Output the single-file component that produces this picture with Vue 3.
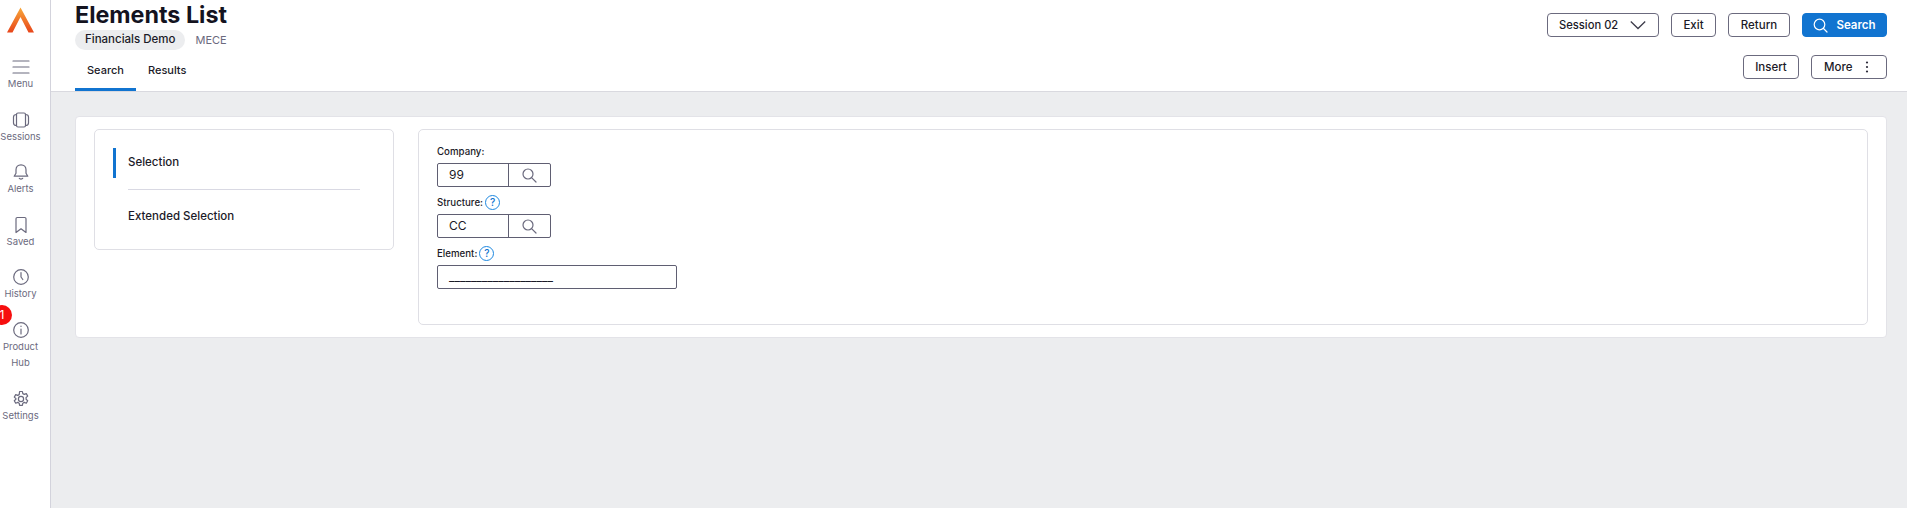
<script setup>
const nav = [
  { label: 'Menu', icon: 'menu' },
  { label: 'Sessions', icon: 'sessions' },
  { label: 'Alerts', icon: 'alerts' },
  { label: 'Saved', icon: 'saved' },
  { label: 'History', icon: 'history' },
  { label: 'Product Hub', icon: 'info', badge: 1 },
  { label: 'Settings', icon: 'settings' },
]
</script>

<template>
  <div class="app">
    <aside class="side">
      <svg class="logo" width="27" height="26" viewBox="0 0 27 26">
        <defs>
          <linearGradient id="lg" x1="0" y1="0" x2="0" y2="1">
            <stop offset="0" stop-color="#f8a83a" />
            <stop offset="1" stop-color="#e8451a" />
          </linearGradient>
        </defs>
        <path d="M13.500 0.500 L27 25.500 L21.500 25.500 L13.500 10 L5.500 25.500 L0 25.500 Z" fill="url(#lg)" />
      </svg>
      <div v-for="n in nav" :key="n.label" class="nav" :class="'nav-' + n.icon">
        <span v-if="n.badge" class="badge">{{ n.badge }}</span>
        <svg width="18" height="18" viewBox="0 0 18 18" fill="none" stroke="#6b6a7e" stroke-width="1.200" stroke-linecap="round" stroke-linejoin="round">
          <template v-if="n.icon === 'menu'">
            <path d="M1 3h16M1 9h16M1 15h16" />
          </template>
          <template v-else-if="n.icon === 'sessions'">
            <rect x="4.500" y="2" width="9" height="14" rx="1.500" />
            <path d="M4.500 3.500C2.500 3.500 1.500 4.500 1.500 6v6c0 1.500 1 2.500 3 2.500M13.500 3.500c2 0 3 1 3 2.500v6c0 1.500-1 2.500-3 2.500" />
          </template>
          <template v-else-if="n.icon === 'alerts'">
            <path d="M9 1.800c-3 0-5 2.200-5 5v3.400l-1.800 3h13.600l-1.800-3V6.800c0-2.800-2-5-5-5z" />
            <path d="M7.300 15.300c.4 1 3 1 3.400 0" />
          </template>
          <template v-else-if="n.icon === 'saved'">
            <path d="M4 2.800C4 2 4.600 1.500 5.300 1.500h7.400c.7 0 1.300.5 1.300 1.300v13.700l-5-3.700-5 3.700z" />
          </template>
          <template v-else-if="n.icon === 'history'">
            <circle cx="9" cy="9" r="7.300" />
            <path d="M9 4.500V9l1.800 2.500" />
          </template>
          <template v-else-if="n.icon === 'info'">
            <circle cx="9" cy="9" r="7.300" />
            <path d="M9 8v5M9 5.200v.3" />
          </template>
          <template v-else>
            <circle cx="9" cy="9" r="2.600" />
            <path d="M7.600 1.500h2.800l.4 2.100 1.500.8 2-.8 1.400 2.500-1.600 1.400v1.800l1.600 1.400-1.400 2.500-2-.8-1.500.8-.4 2.100H7.600l-.4-2.100-1.500-.8-2 .8-1.400-2.500 1.600-1.400V8.500L2.300 7.100l1.400-2.500 2 .8 1.500-.8z" />
          </template>
        </svg>
        <span class="nav-label">{{ n.label }}</span>
      </div>
    </aside>

    <div class="body">
      <header class="head">
        <div class="head-left">
          <h1>Elements List</h1>
          <div class="crumbs">
            <span class="pill">Financials Demo</span>
            <span class="mece">MECE</span>
          </div>
          <nav class="tabs">
            <span class="tab active">Search</span>
            <span class="tab">Results</span>
          </nav>
        </div>
        <div class="head-right">
          <div class="row">
            <button class="btn session">
              <span>Session 02</span>
              <svg width="16" height="10" viewBox="0 0 16 10" fill="none" stroke="#3c3b4a" stroke-width="1.300"><path d="M0.800 1.500L8 8.500l7.200-7" /></svg>
            </button>
            <button class="btn exit">Exit</button>
            <button class="btn ret">Return</button>
            <button class="btn primary">
              <svg width="15" height="15" viewBox="0 0 15 15" fill="none" stroke="#fff" stroke-width="1.200" stroke-linecap="round"><circle cx="6.500" cy="6.500" r="5.300" /><path d="M10.500 10.500l3.500 3.500" /></svg>
              <span>Search</span>
            </button>
          </div>
          <div class="row">
            <button class="btn insert">Insert</button>
            <button class="btn more">
              <span>More</span>
              <svg width="4" height="12" viewBox="0 0 4 12" fill="#2c2b3a"><circle cx="2" cy="1.500" r="1.100" /><circle cx="2" cy="6" r="1.100" /><circle cx="2" cy="10.500" r="1.100" /></svg>
            </button>
          </div>
        </div>
      </header>

      <main class="main">
        <section class="card">
          <div class="steps">
            <div class="step current"><span>Selection</span></div>
            <div class="sep"></div>
            <div class="step ext"><span>Extended Selection</span></div>
          </div>
          <div class="panel">
            <label class="lbl first">Company:</label>
            <div class="lookup">
              <span class="val">99</span>
              <span class="find">
                <svg width="15" height="15" viewBox="0 0 15 15" fill="none" stroke="#6b6a7e" stroke-width="1.200" stroke-linecap="round"><circle cx="6" cy="6" r="5" /><path d="M9.800 9.800l4.200 4.200" /></svg>
              </span>
            </div>
            <label class="lbl">Structure:<span class="help">?</span></label>
            <div class="lookup">
              <span class="val">CC</span>
              <span class="find">
                <svg width="15" height="15" viewBox="0 0 15 15" fill="none" stroke="#6b6a7e" stroke-width="1.200" stroke-linecap="round"><circle cx="6" cy="6" r="5" /><path d="M9.800 9.800l4.200 4.200" /></svg>
              </span>
            </div>
            <label class="lbl">Element:<span class="help">?</span></label>
            <div class="wide"><span class="val">___________________</span></div>
          </div>
        </section>
      </main>
    </div>
  </div>
</template>

<style scoped>
.app {
  display: flex;
  height: 508px;
  width: 1907px;
  overflow: hidden;
  font-family: Inter, "Noto Sans", "Liberation Sans", sans-serif;
  color: #1b1a28;
}
.side {
  width: 50px;
  flex: none;
  border-right: 1px solid #d3d3dc;
  background: #fff;
  display: flex;
  flex-direction: column;
  align-items: flex-start;
  box-sizing: content-box;
  padding-top: 7px;
}
.logo { margin: 0 0 25px 7px; flex: none; }
.nav {
  position: relative;
  display: flex;
  flex-direction: column;
  align-items: center;
  width: 41px;
  height: 52.500px;
  flex: none;
}
.nav-info { height: 69px; }
.nav-label {
  font-size: 9.500px;
  line-height: 16px;
  color: #6b6a7e;
  text-align: center;
}
.badge {
  position: absolute;
  left: -8px;
  top: -16px;
  width: 20px;
  height: 20px;
  border-radius: 50%;
  background: #f60f0f;
  color: #fff;
  font-size: 12px;
  line-height: 20px;
  text-align: center;
}
.body { flex: 1; display: flex; flex-direction: column; min-width: 0; }
.head {
  border-bottom: 1px solid #d9d9df;
  background: #fff;
  display: flex;
  justify-content: space-between;
  padding: 0 20px 0 24px;
  flex: none;
  height: 91px;
  box-sizing: content-box;
}
.head-left { display: flex; flex-direction: column; }
h1 {
  margin: 0;
  font-size: 23.300px;
  font-weight: 700;
  line-height: 29px;
  color: #14131f;
}
.crumbs { display: flex; align-items: center; gap: 10px; margin-top: 1px; }
.pill {
  background: #ecedef;
  border-radius: 10px;
  height: 20px;
  line-height: 19px;
  padding: 0 10px;
  font-size: 11.500px;
  font-weight: 500;
}
.mece { font-size: 11px; color: #6b6a7e; }
.tabs { display: flex; margin-top: 6px; }
.tab {
  font-size: 11px;
  font-weight: 500;
  line-height: 28px;
  padding: 0 12px;
  height: 32px;
  box-sizing: content-box;
  border-bottom: 3px solid transparent;
}
.tab.active { border-bottom-color: #1174d0; }
.head-right { display: flex; flex-direction: column; align-items: flex-end; gap: 18px; padding-top: 13px; }
.row { display: flex; gap: 12px; }
.btn {
  font: inherit;
  font-size: 11.500px;
  font-weight: 500;
  color: #1b1a28;
  height: 24px;
  padding: 0;
  background: #fff;
  border: 1px solid #6b6a7e;
  border-radius: 4px;
  display: flex;
  align-items: center;
  justify-content: center;
  box-sizing: border-box;
}
.session { width: 112px; gap: 12px; justify-content: flex-start; padding-left: 11px; font-size: 11.200px; }
.exit { width: 45px; }
.ret { width: 62px; }
.primary { width: 85px; background: #1174d0; border-color: #1174d0; color: #fff; font-weight: 600; gap: 8px; }
.insert { width: 56px; }
.more { width: 76px; gap: 13px; justify-content: flex-start; padding-left: 12px; }
.main { flex: 1; background: #ecedef; padding: 24px 20px 0 24px; }
.card {
  background: #fff;
  border: 1px solid #e3e3e8;
  border-radius: 4px;
  height: 222px;
  box-sizing: border-box;
  display: flex;
  padding: 12px 18px;
  gap: 24px;
}
.steps {
  width: 300px;
  height: 121px;
  flex: none;
  border: 1px solid #dfdfe5;
  border-radius: 5px;
  box-sizing: border-box;
  padding: 18px 33px 0 18px;
}
.step {
  height: 30px;
  display: flex;
  align-items: center;
  font-size: 11.500px;
  font-weight: 500;
  padding: 0 0 2px 12px;
  box-sizing: border-box;
  border-left: 3px solid transparent;
}
.step.current { border-left-color: #1174d0; }
.sep { height: 1px; background: #d9d9e3; margin: 11px 0 11px 15px; }
.step.ext { margin-top: 16px; height: 20px; padding-bottom: 0; }
.panel {
  flex: 1;
  height: 196px;
  border: 1px solid #dfdfe5;
  border-radius: 5px;
  box-sizing: border-box;
  padding: 14px 18px;
  display: flex;
  flex-direction: column;
}
.lbl {
  font-size: 9.700px;
  font-weight: 500;
  height: 20px;
  padding-bottom: 4px;
  box-sizing: border-box;
  display: flex;
  align-items: center;
  color: #1b1a28;
}
.lbl.first { height: 19px; }
.help {
  width: 15px;
  height: 15px;
  border: 1px solid #1e88e0;
  border-radius: 50%;
  box-sizing: border-box;
  color: #1174d0;
  font-size: 10px;
  line-height: 13px;
  text-align: center;
  margin-left: 2px;
  flex: none;
}
.lookup, .wide {
  display: flex;
  height: 24px;
  flex: none;
  border: 1px solid #5f5e72;
  border-radius: 2px;
  box-sizing: border-box;
  margin-bottom: 7px;
  font-size: 12px;
}
.lookup { width: 114px; }
.wide { width: 240px; }
.val { padding-left: 11px; line-height: 22px; flex: 1; overflow: hidden; white-space: nowrap; }
.find {
  width: 41px;
  flex: none;
  border-left: 1px solid #5f5e72;
  display: flex;
  align-items: center;
  justify-content: center;
}
</style>

<style>
html, body { margin: 0; background: #fff; }
</style>
